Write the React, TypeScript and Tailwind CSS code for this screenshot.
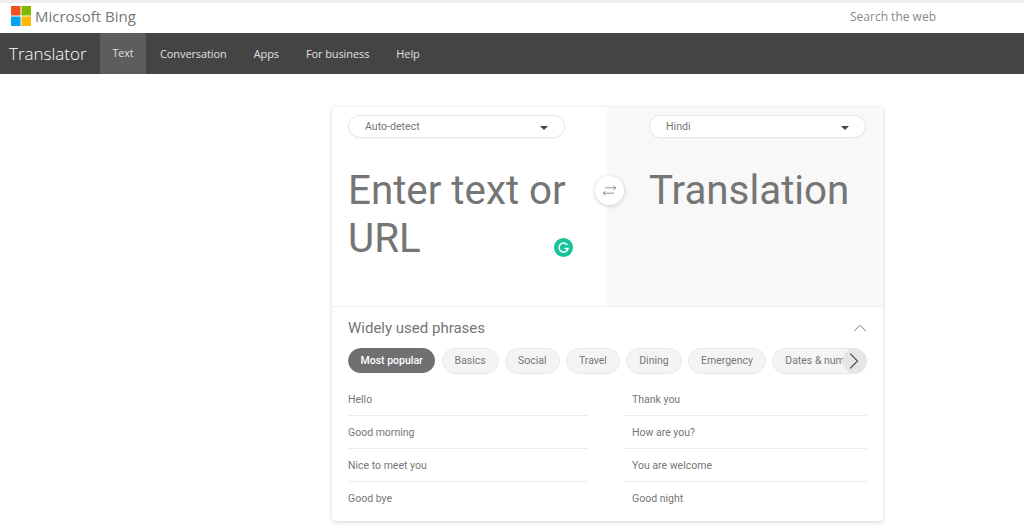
import { ChevronRight, ChevronUp } from 'lucide-react'

const navItems = ['Conversation', 'Apps', 'For business', 'Help']
const chips = ['Basics', 'Social', 'Travel', 'Dining', 'Emergency']
const leftPhrases = ['Hello', 'Good morning', 'Nice to meet you', 'Good bye']
const rightPhrases = ['Thank you', 'How are you?', 'You are welcome', 'Good night']

function MsLogo() {
  return (
    <svg width="20" height="20" viewBox="0 0 20 20" className="shrink-0">
      <rect x="0" y="0" width="9.5" height="9.5" fill="#f25022" />
      <rect x="10.5" y="0" width="9.5" height="9.5" fill="#7fba00" />
      <rect x="0" y="10.5" width="9.5" height="9.5" fill="#00a4ef" />
      <rect x="10.5" y="10.5" width="9.5" height="9.5" fill="#ffb900" />
    </svg>
  )
}

function LangSelect({ label }: { label: string }) {
  return (
    <div className="flex h-[23px] w-[217px] items-center justify-between rounded-full border border-[#e6e6e6] bg-white pl-[16px] pr-[16px] shadow-[0_1px_1px_rgba(0,0,0,0.03)]">
      <span className="text-[10.6px] text-[#757575]">{label}</span>
      <svg width="8" height="4" viewBox="0 0 8 4" className="mt-[2px]">
        <path d="M0 0h8L4 4z" fill="#444" />
      </svg>
    </div>
  )
}

function Chip({ label }: { label: string }) {
  return (
    <div className="flex h-[26px] shrink-0 items-center rounded-full border border-[#e8e8e8] bg-[#f4f4f4] px-[12px] text-[10.5px] text-[#767676]">
      {label}
    </div>
  )
}

function PhraseColumn({ items, inset }: { items: string[]; inset?: boolean }) {
  return (
    <div className="flex flex-col">
      {items.map((item, i) => (
        <div
          key={item}
          className={`flex h-[33px] items-center pt-[2px] text-[10.5px] text-[#767676] border-b ${inset ? 'pl-[8px]' : ''} ${
            i < items.length - 1 ? 'border-[#ececec]' : 'border-transparent'
          }`}
        >
          {item}
        </div>
      ))}
    </div>
  )
}

export default function App() {
  return (
    <div className="h-[531px] w-[1024px] overflow-hidden bg-white font-['Roboto',sans-serif]">
      {/* Bing header */}
      <header className="flex h-[33px] items-center border-t-[3px] border-[#efefef] pb-[4px] pl-[11px] pr-[88px] font-['Open_Sans',sans-serif]">
        <MsLogo />
        <span className="ml-[4px] text-[15px] font-medium text-[#777777]">Microsoft Bing</span>
        <span className="ml-auto pt-[1px] text-[12px] text-[#8a8a8a]">Search the web</span>
      </header>

      {/* Translator nav */}
      <nav className="flex h-[41px] items-stretch bg-[#444444] font-['Open_Sans',sans-serif] text-white">
        <div className="flex w-[100px] items-center pl-[9px] text-[17px] font-light">Translator</div>
        <div className="flex w-[46px] items-center justify-center bg-[#5d5d5d] pt-[1px] text-[10.5px] text-[#e0e0e0]">Text</div>
        <div className="ml-[14px] flex items-center gap-[27px] pt-[1px] text-[11px] tracking-[-0.1px] text-[#e0e0e0]">
          {navItems.map((item) => (
            <span key={item}>{item}</span>
          ))}
        </div>
      </nav>

      {/* Translator card */}
      <main className="ml-[332px] mt-[33px] w-[551px] rounded-[4px] bg-white shadow-[0_1px_4px_rgba(0,0,0,0.18)]">
        <div className="relative flex h-[200px] border-b border-[#eeeeee]">
          <div className="w-[275px] pl-[16px] pt-[8px]">
            <LangSelect label="Auto-detect" />
            <p className="mt-[29px] w-[225px] text-[40.3px] leading-[48px] text-[#757575]">Enter text or URL</p>
          </div>
          <div className="flex-1 rounded-tr-[4px] bg-[#f8f8f8] pl-[42px] pt-[8px]">
            <LangSelect label="Hindi" />
            <p className="mt-[29px] text-[40.3px] leading-[48px] text-[#757575]">Translation</p>
          </div>

          {/* swap button */}
          <div className="absolute left-[263px] top-[69px] flex h-[29px] w-[29px] items-center justify-center rounded-full bg-white shadow-[0_1px_4px_rgba(0,0,0,0.2)]">
            <svg width="13" height="13" viewBox="0 0 13 13" fill="none" stroke="#888" strokeWidth="0.9">
              <path d="M2 3.8h11M10.5 1.8L13 3.8l-2.5 2" />
              <path d="M11 9.2H0M2.5 7.2L0 9.2l2.5 2" />
            </svg>
          </div>

          {/* grammarly badge */}
          <div className="absolute left-[222px] top-[131px] flex h-[19px] w-[19px] items-center justify-center rounded-full bg-[#15c39a]">
            <svg width="13" height="13" viewBox="0 0 13 13" fill="none" stroke="#fff" strokeWidth="1.5">
              <path d="M10.3 4A4.5 4.5 0 1 0 11 7.5H7.5" />
            </svg>
          </div>
        </div>

        <section className="px-[16px] pb-[6px] pt-[10px]">
          <div className="flex items-center justify-between">
            <h2 className="text-[15px] leading-[19px] text-[#757575]">Widely used phrases</h2>
            <ChevronUp className="-mr-[4px] h-[22px] w-[22px] text-[#707070]" strokeWidth={1} />
          </div>

          <div className="relative mt-[9px] flex gap-[6.3px] overflow-hidden rounded-full">
            <div className="flex h-[25px] shrink-0 items-center rounded-full bg-[#707070] px-[12.5px] text-[10.5px] font-medium text-white">
              Most popular
            </div>
            {chips.map((chip) => (
              <Chip key={chip} label={chip} />
            ))}
            <Chip label="Dates & numbers" />
            <div className="absolute right-0 top-0 flex h-[26px] w-[24px] items-center justify-center rounded-full bg-[#e6e6e6]">
              <ChevronRight className="mr-[3px] h-[28px] w-[28px] shrink-0 text-[#5c5c5c]" strokeWidth={1.1} />
            </div>
          </div>

          <div className="mt-[9px] grid grid-cols-[240px_243px] gap-x-[36px]">
            <PhraseColumn items={leftPhrases} />
            <PhraseColumn items={rightPhrases} inset />
          </div>
        </section>
      </main>
    </div>
  )
}
